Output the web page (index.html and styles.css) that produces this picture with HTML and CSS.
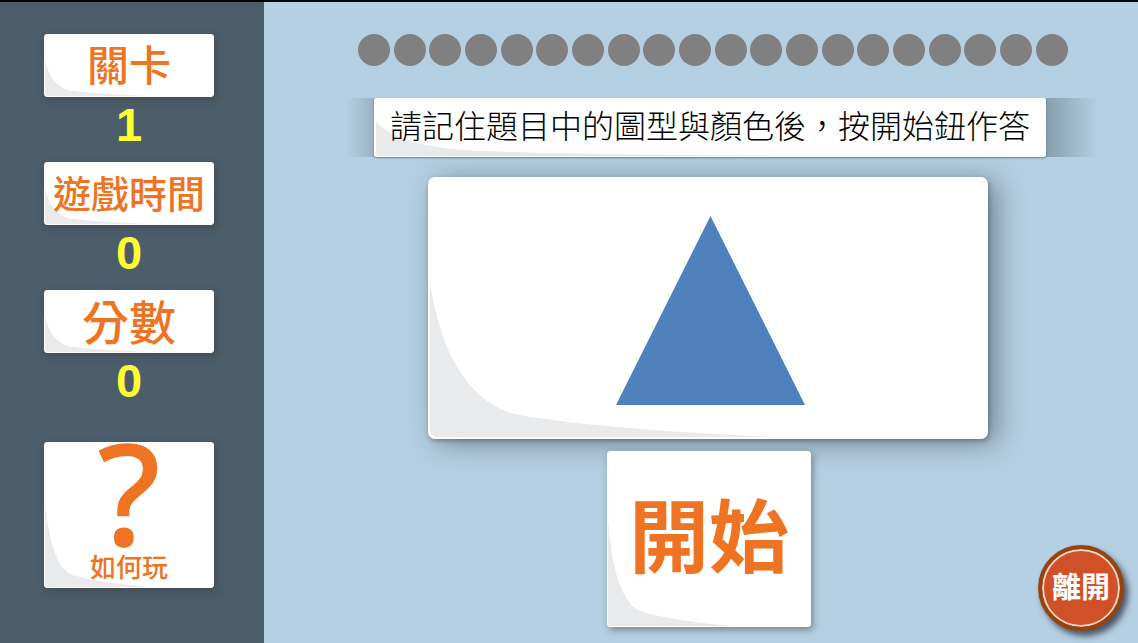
FILE: index.html
```html
<!DOCTYPE html>
<html lang="zh-Hant">
<head>
<meta charset="utf-8">
<meta name="viewport" content="width=device-width, initial-scale=1">
<title>圖型與顏色</title>
<link rel="stylesheet" href="styles.css">
</head>
<body>
<svg class="defs" aria-hidden="true">
  <symbol id="curl" viewBox="0 0 100 100" preserveAspectRatio="none">
    <path d="M0 40C2 68 7 86 15 91C24 95 42 98 62 100H0Z" fill="#e9eaec"/>
  </symbol>
</svg>
<div class="game">
  <aside class="sidebar">
    <dl class="stats">
      <div class="stat">
        <dt class="card label label-level"><svg class="curl" aria-hidden="true"><use href="#curl"/></svg><span>關卡</span></dt>
        <dd class="value">1</dd>
      </div>
      <div class="stat">
        <dt class="card label label-time"><svg class="curl" aria-hidden="true"><use href="#curl"/></svg><span>遊戲時間</span></dt>
        <dd class="value">0</dd>
      </div>
      <div class="stat">
        <dt class="card label label-score"><svg class="curl" aria-hidden="true"><use href="#curl"/></svg><span>分數</span></dt>
        <dd class="value">0</dd>
      </div>
    </dl>
    <button class="card help" type="button"><svg class="curl" aria-hidden="true"><use href="#curl"/></svg><span class="help-mark">?</span><span class="help-text">如何玩</span></button>
  </aside>
  <main class="board">
    <div class="progress" role="img" aria-label="20">
      <i class="dot"></i><i class="dot"></i><i class="dot"></i><i class="dot"></i><i class="dot"></i>
      <i class="dot"></i><i class="dot"></i><i class="dot"></i><i class="dot"></i><i class="dot"></i>
      <i class="dot"></i><i class="dot"></i><i class="dot"></i><i class="dot"></i><i class="dot"></i>
      <i class="dot"></i><i class="dot"></i><i class="dot"></i><i class="dot"></i><i class="dot"></i>
    </div>
    <div class="banner">
      <p class="card prompt"><svg class="curl" aria-hidden="true"><use href="#curl"/></svg><span>請記住題目中的圖型與顏色後，按開始鈕作答</span></p>
    </div>
    <div class="card stage">
      <svg class="curl" aria-hidden="true"><use href="#curl"/></svg>
      <svg class="shape" viewBox="0 0 189 189" aria-hidden="true"><path d="M94.500 0L189 189H0Z" fill="#4f81bd"/></svg>
    </div>
    <button class="card start" type="button"><svg class="curl" aria-hidden="true"><use href="#curl"/></svg><span>開始</span></button>
  </main>
  <button class="exit" type="button">離開</button>
</div>
</body>
</html>
```

FILE: styles.css
```css
* {
  box-sizing: border-box;
}

body {
  margin: 0;
  background: #b5d0e3;
  font-family: "Liberation Sans", "Noto Sans CJK TC", sans-serif;
}

button {
  border: 0;
  padding: 0;
  font-family: inherit;
  cursor: pointer;
}

.defs {
  position: absolute;
  width: 0;
  height: 0;
}

.game {
  position: relative;
  display: flex;
  min-height: 100vh;
  border-top: 2px solid #000;
}

.sidebar {
  flex: none;
  width: 264px;
  padding: 32px 50px 55px 44px;
  background: #4b5d6a;
}

.card {
  position: relative;
  z-index: 0;
  background: #fff;
  border: 1px solid #fff;
  border-radius: 3px;
  color: #ee7423;
  box-shadow: 2px 3px 7px rgba(60, 60, 60, 0.5);
}

.curl {
  position: absolute;
  z-index: -1;
  inset: 0;
  width: 100%;
  height: 100%;
  border-radius: inherit;
}

.stats {
  margin: 0 0 24px;
}

.label {
  display: flex;
  align-items: center;
  justify-content: center;
  height: 63px;
  padding-top: 3px;
  font-weight: 500;
  line-height: 1;
}

.label-level {
  font-size: 42px;
}

.label-time {
  font-size: 38px;
}

.label-score {
  font-size: 47px;
}

.value {
  margin: 0;
  height: 65px;
  color: #ffff32;
  font-size: 47px;
  font-weight: 700;
  line-height: 56px;
  text-align: center;
}

.help {
  display: flex;
  flex-direction: column;
  align-items: center;
  width: 100%;
  height: 146px;
}

.help-mark {
  height: 109px;
  font-family: "Noto Sans", sans-serif;
  font-size: 142px;
  font-weight: 500;
  line-height: 97px;
}

.help-text {
  font-size: 26px;
  font-weight: 500;
  line-height: 32px;
}

.board {
  flex: 1;
  display: flex;
  flex-direction: column;
  align-items: center;
  padding: 32px 0 16px 16px;
}

.progress {
  display: flex;
  justify-content: space-between;
  width: 718px;
  max-width: 100%;
  padding-left: 8px;
}

.dot {
  width: 32px;
  height: 32px;
  border-radius: 50%;
  background: #808080;
}

.banner {
  margin: 32px 0 0 26px;
  padding: 0 52px 0 28px;
  background:
    linear-gradient(to left, #9bb3c4, #b5d0e3) left / 28px 100% no-repeat,
    linear-gradient(to right, #869eae, #b5d0e3) right / 52px 100% no-repeat;
}

.prompt {
  margin: 0;
  padding: 0 14px;
  border-width: 1px 2px;
  color: #000;
  font-size: 32px;
  font-weight: 300;
  line-height: 57px;
  box-shadow: 0 1px 2px rgba(50, 70, 85, 0.6);
}

.stage {
  display: flex;
  justify-content: center;
  width: 560px;
  max-width: 100%;
  margin: 20px 2px 0 0;
  padding: 37px 0 32px 4px;
  border-width: 2px;
  border-radius: 7px;
  box-shadow: 9px 4px 28px rgba(70, 80, 90, 0.6), 1px 2px 4px rgba(70, 80, 90, 0.5);
}

.shape {
  width: 189px;
  height: 189px;
}

.start {
  width: 204px;
  height: 176px;
  margin-top: 12px;
  font-size: 80px;
  font-weight: 700;
  line-height: 174px;
}

.exit {
  position: absolute;
  right: 14px;
  bottom: 12px;
  width: 86px;
  height: 86px;
  border: 4px solid #93440f;
  border-radius: 50%;
  background: #d05028;
  color: #fff;
  font-size: 29px;
  font-weight: 700;
  line-height: 74px;
  box-shadow: inset 0 0 0 2px #f6d5c5, 4px 5px 6px rgba(40, 40, 60, 0.75);
}
```
